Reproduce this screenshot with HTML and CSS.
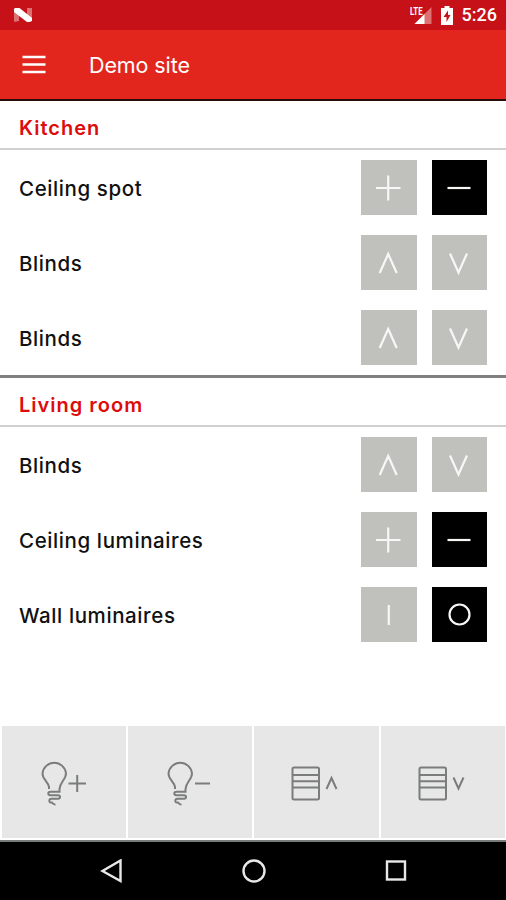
FILE: index.html
```html
<!DOCTYPE html>
<html lang="en">
<head>
  <meta charset="UTF-8">
  <meta name="viewport" content="width=device-width, initial-scale=1.0">
  <title>Demo site</title>
  <link rel="stylesheet" href="styles.css">
</head>
<body>

  <!-- Shared icons -->
  <svg class="sprite" width="0" height="0">
    <symbol id="plus" viewBox="0 0 55 55"><path d="M15 28H39.500M27.200 15.500V40.500"/></symbol>
    <symbol id="minus" viewBox="0 0 55 55"><path d="M15.500 28H38.500"/></symbol>
    <symbol id="up" viewBox="0 0 55 55"><path d="M18.700 38L27.200 19L35.700 38"/></symbol>
    <symbol id="down" viewBox="0 0 55 55"><path d="M18 18.500L26.500 37.500L35 18.500"/></symbol>
    <symbol id="on" viewBox="0 0 55 55"><path d="M27.800 18V38"/></symbol>
    <symbol id="off" viewBox="0 0 55 55"><circle cx="27.500" cy="27.500" r="10"/></symbol>
    <symbol id="bulb" viewBox="0 0 26 48">
      <path d="M8 29V27C7 21.500 1.500 19.500 1.500 13.500A11.800 11.800 0 0 1 25 13.500C25 19.500 19 22 18.500 29V31.700H9.500Q7.300 31.700 7.300 33.500T9.500 35.300H17Q19 35.300 19 37T17 38.700H10.500Q8.300 38.700 8.300 41Q8.500 43 11 42.500Q12.500 44.800 14.500 44.500"/>
    </symbol>
    <symbol id="blind" viewBox="0 0 30 36">
      <rect x="1.500" y="1.500" width="26.500" height="32" rx="1.500"/>
      <path d="M1.500 9H28M1.500 15.300H28M1.500 21.500H28"/>
    </symbol>
  </svg>

  <div class="status-bar">
    <svg class="nougat" width="20" height="16" viewBox="0 0 20 16">
      <path class="faded" d="M1 2L6 3V14L1 15ZM14 1L19 1V14L14 13Z"/>
      <path d="M2 1H6.500L19 11V14L16.500 15H14L1 5V2Z"/>
    </svg>
    <div class="status-icons">
      <svg class="signal" width="24" height="20" viewBox="0 0 24 20">
        <path class="faded" d="M22.500 2V19H5.500Z"/>
        <path d="M15.500 9V19H5.500Z"/>
        <text x="1" y="10" textLength="12.500" lengthAdjust="spacingAndGlyphs">LTE</text>
      </svg>
      <svg class="battery" width="12" height="19" viewBox="0 0 12 19">
        <path d="M3.500 0H8.500V2H12V19H0V2H3.500Z"/>
        <path class="bolt" d="M7 4.500L2.500 11H5.500V16L9.500 9H7Z"/>
      </svg>
      <span class="time">5:26</span>
    </div>
  </div>

  <header class="app-bar">
    <svg class="menu" width="24" height="20" viewBox="0 0 24 20">
      <path d="M0.500 2H23.500M0.500 9.500H23.500M0.500 17H23.500"/>
    </svg>
    <h1>Demo site</h1>
  </header>

  <main>
    <section class="room">
      <h2>Kitchen</h2>
      <div class="device">
        <span>Ceiling spot</span>
        <button class="btn"><svg><use href="#plus"/></svg></button>
        <button class="btn active"><svg><use href="#minus"/></svg></button>
      </div>
      <div class="device">
        <span>Blinds</span>
        <button class="btn"><svg><use href="#up"/></svg></button>
        <button class="btn"><svg><use href="#down"/></svg></button>
      </div>
      <div class="device">
        <span>Blinds</span>
        <button class="btn"><svg><use href="#up"/></svg></button>
        <button class="btn"><svg><use href="#down"/></svg></button>
      </div>
    </section>

    <section class="room">
      <h2>Living room</h2>
      <div class="device">
        <span>Blinds</span>
        <button class="btn"><svg><use href="#up"/></svg></button>
        <button class="btn"><svg><use href="#down"/></svg></button>
      </div>
      <div class="device">
        <span>Ceiling luminaires</span>
        <button class="btn"><svg><use href="#plus"/></svg></button>
        <button class="btn active"><svg><use href="#minus"/></svg></button>
      </div>
      <div class="device">
        <span>Wall luminaires</span>
        <button class="btn"><svg><use href="#on"/></svg></button>
        <button class="btn active"><svg><use href="#off"/></svg></button>
      </div>
    </section>
  </main>

  <div class="scenes">
    <button class="scene">
      <svg width="46" height="48" viewBox="0 0 46 48"><use href="#bulb" width="26" height="48"/><path d="M27.500 23.500H45M36.200 15V32"/></svg>
    </button>
    <button class="scene">
      <svg width="46" height="48" viewBox="0 0 46 48"><use href="#bulb" width="26" height="48"/><path d="M28 23.500H43"/></svg>
    </button>
    <button class="scene">
      <svg width="50" height="48" viewBox="0 0 50 48"><use href="#blind" y="6" width="30" height="36"/><path d="M35.500 29L40.500 18L45.500 29"/></svg>
    </button>
    <button class="scene">
      <svg width="50" height="48" viewBox="0 0 50 48"><use href="#blind" y="6" width="30" height="36"/><path d="M35.500 17.500L40.500 28.500L45.500 17.500"/></svg>
    </button>
  </div>

  <nav class="nav-bar">
    <svg width="24" height="24" viewBox="0 0 24 24"><path d="M20.500 1.500V22L2.500 12Z"/></svg>
    <svg width="24" height="24" viewBox="0 0 24 24"><circle cx="12" cy="12" r="10.500"/></svg>
    <svg width="24" height="24" viewBox="0 0 24 24"><rect x="3" y="2.500" width="18" height="18"/></svg>
  </nav>

</body>
</html>
```
FILE: styles.css
```css
* {
  box-sizing: border-box;
}

body {
  display: flex;
  flex-direction: column;
  height: 900px;
  margin: 0;
  background: #fff;
  color: #111;
  font-family: Inter, sans-serif;
}

svg {
  display: block;
}

button {
  padding: 0;
  border: none;
}

.sprite {
  position: absolute;
}

.status-bar {
  display: flex;
  align-items: center;
  justify-content: space-between;
  height: 30px;
  padding: 0 9px 0 13px;
  background: #c51117;
  color: #fff;
  fill: #fff;
}

.faded {
  fill: #fff;
  opacity: 0.4;
}

.status-icons {
  display: flex;
  align-items: center;
}

.signal {
  margin: 0 8px 0 0;
}

.signal text {
  font: bold 10px Roboto, sans-serif;
}

.battery {
  margin-right: 9px;
}

.bolt {
  fill: #c51117;
}

.time {
  font: 500 18px/32px Roboto, sans-serif;
}

.app-bar {
  display: flex;
  align-items: center;
  height: 71px;
  padding-left: 22px;
  border-bottom: 2px solid #260e0d;
  background: #e2261d;
  color: #fff;
}

.menu {
  margin-right: 43px;
  stroke: #fff;
  stroke-width: 2.6;
}

h1 {
  margin: 0;
  font-size: 21.5px;
  font-weight: 400;
  letter-spacing: -0.1px;
}

main {
  flex: 1;
}

.room + .room {
  border-top: 3px solid #808080;
}

.room h2 {
  height: 49px;
  margin: 0;
  padding-left: 19px;
  border-bottom: 2px solid #d0d0d0;
  color: #dd0c0c;
  font-size: 20px;
  font-weight: 600;
  line-height: 55px;
  letter-spacing: 1px;
}

.device {
  display: flex;
  align-items: center;
  height: 75px;
  padding: 0 19px;
}

.device span {
  flex: 1;
  padding-top: 2px;
  font-size: 20.5px;
  font-weight: 500;
  letter-spacing: 0.6px;
}

.btn {
  width: 55.5px;
  height: 55.5px;
  margin-left: 15px;
  background: #c0c1bc;
}

.btn.active {
  background: #000;
}

.btn svg {
  width: 55px;
  height: 55px;
  fill: none;
  stroke: #f7f7f5;
  stroke-width: 2.2;
}

.scenes {
  display: grid;
  grid-template-columns: 124px 1fr 1fr 1fr;
  gap: 2px;
  height: 116px;
  padding: 0 1px 2px 2px;
  border-bottom: 2px solid #777b79;
}

.scene {
  display: flex;
  align-items: center;
  justify-content: center;
  padding-top: 3px;
  background: #e7e7e7;
}

.scene svg {
  fill: none;
  stroke: #7b7d7c;
  stroke-width: 2;
}

.nav-bar {
  display: flex;
  justify-content: center;
  gap: 118px;
  height: 58px;
  padding: 17px 0 0 1px;
  background: #000;
  fill: none;
  stroke: #e8e8e8;
  stroke-width: 2.4;
}
```
